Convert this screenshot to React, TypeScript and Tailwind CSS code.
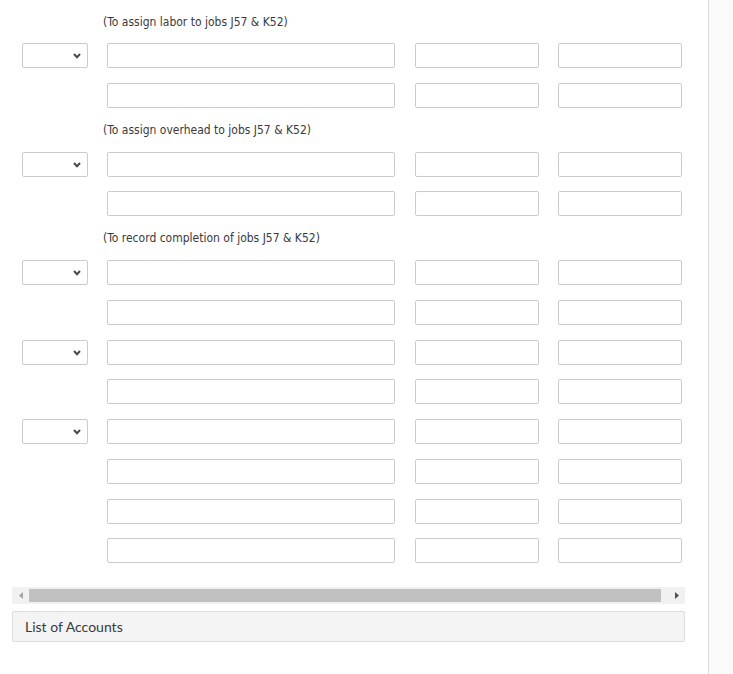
import React from 'react';

type Section = {
  heading: string;
  rows: boolean[]; // true = row has an account select
};

const sections: Section[] = [
  { heading: '(To assign labor to jobs J57 & K52)', rows: [true, false] },
  { heading: '(To assign overhead to jobs J57 & K52)', rows: [true, false] },
  {
    heading: '(To record completion of jobs J57 & K52)',
    rows: [true, false, true, false, true, false, false, false],
  },
];

function SelectBox() {
  return (
    <div className="relative h-[25px] w-[66px] rounded-[2px] border border-[#cccccc] bg-white">
      <svg
        className="absolute left-[50px] top-[9px]"
        width="8"
        height="6"
        viewBox="0 0 8 6"
        fill="none"
      >
        <path d="M1 1 L4 4.2 L7 1" stroke="#4a4a4a" strokeWidth="2" />
      </svg>
    </div>
  );
}

function Field({ width }: { width: string }) {
  return (
    <div
      className={`h-[25px] ${width} rounded-[2px] border border-[#cccccc] bg-white`}
    />
  );
}

function EntryRow({ hasSelect }: { hasSelect: boolean }) {
  return (
    <div className="flex items-center">
      <div className="ml-[22px] w-[66px]">{hasSelect && <SelectBox />}</div>
      <div className="ml-[19px]">
        <Field width="w-[288px]" />
      </div>
      <div className="ml-[20px]">
        <Field width="w-[124px]" />
      </div>
      <div className="ml-[19px]">
        <Field width="w-[124px]" />
      </div>
    </div>
  );
}

export default function App() {
  return (
    <div className="flex min-h-[674px] w-[733px] bg-white">
      <div className="w-[708px] shrink-0">
        <div className="flex flex-col">
          {sections.map((section, si) => (
            <div key={si} className="flex flex-col">
              <div
                className={`flex items-center pl-[103px] ${si === 0 ? 'h-[43px]' : 'h-[44px]'}`}
              >
                <span
                  className="text-[12px] text-[#3a3a3a]"
                  style={{ fontFamily: "'DejaVu Sans Condensed', 'DejaVu Sans', sans-serif" }}
                >
                  {section.heading}
                </span>
              </div>
              <div className="flex flex-col gap-y-[14.7px]">
                {section.rows.map((hasSelect, ri) => (
                  <EntryRow key={ri} hasSelect={hasSelect} />
                ))}
              </div>
            </div>
          ))}
        </div>

        {/* horizontal scrollbar */}
        <div className="ml-[12px] mt-[24px] flex h-[17px] w-[673px] items-center bg-[#f1f1f1]">
          <div className="flex w-[17px] justify-center">
            <svg width="4" height="7" viewBox="0 0 4 7">
              <path d="M4 0 L0 3.5 L4 7 Z" fill="#a3a3a3" />
            </svg>
          </div>
          <div className="h-[13px] w-[632px] bg-[#c1c1c1]" />
          <div className="flex flex-1 justify-end pr-[6px]">
            <svg width="4" height="7" viewBox="0 0 4 7">
              <path d="M0 0 L4 3.5 L0 7 Z" fill="#505050" />
            </svg>
          </div>
        </div>

        {/* list of accounts */}
        <div className="ml-[12px] mt-[7px] flex h-[31px] w-[673px] items-center rounded-[2px] border border-[#dcdcdc] bg-[#f4f4f4] pl-[12px]">
          <span
            className="text-[14px] text-[#3a3a3a]"
            style={{ fontFamily: "Lato, 'Open Sans', sans-serif" }}
          >
            List of Accounts
          </span>
        </div>
      </div>
      <div className="flex-1 border-l border-[#dddddd] bg-[#fafafa]" />
    </div>
  );
}
